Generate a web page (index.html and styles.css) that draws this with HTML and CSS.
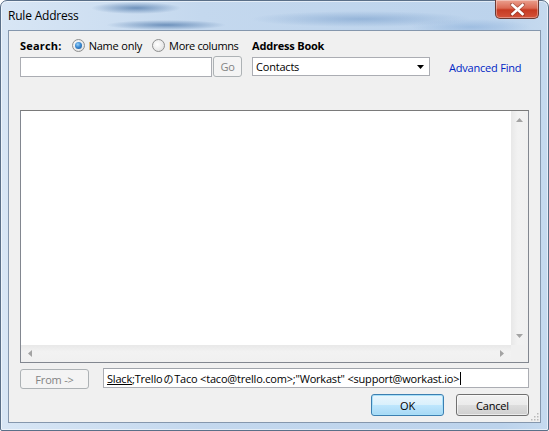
FILE: index.html
```html
<!DOCTYPE html>
<html>
<head>
<meta charset="utf-8">
<link rel="stylesheet" href="styles.css">
</head>
<body>
<div class="window">
  <div class="titlebar">
    <span class="title">Rule Address</span>
    <div class="close">
      <svg width="17" height="13" viewBox="0 0 17 13"><path d="M3 1.5 L14 11.5 M14 1.5 L3 11.5" stroke="#6b2a20" stroke-width="4" stroke-linecap="round" opacity=".45"/><path d="M3.5 2 L13.5 11 M13.5 2 L3.5 11" stroke="#fff" stroke-width="2.6" stroke-linecap="square"/></svg>
    </div>
  </div>
  <div class="client">
    <div class="top">
      <div class="search-head">
        <b class="lbl">Search:</b>
        <span class="radio"><span class="rb on"></span>Name only</span>
        <span class="radio"><span class="rb"></span>More columns</span>
      </div>
      <b class="lbl">Address Book</b>
      <span></span>
      <div class="search-row">
        <div class="field search-field"></div>
        <div class="btn disabled go">Go</div>
      </div>
      <div class="combo">
        <span>Contacts</span>
        <svg width="7" height="4" viewBox="0 0 7 4"><path d="M0 0H7L3.5 4Z" fill="#000"/></svg>
      </div>
      <span class="link">Advanced Find</span>
    </div>
    <div class="listbox">
      <div class="list-area"></div>
      <div class="vscroll">
        <svg width="7" height="4" viewBox="0 0 7 4"><path d="M0 4H7L3.5 0Z" fill="#a3a3a3"/></svg>
        <svg width="7" height="4" viewBox="0 0 7 4"><path d="M0 0H7L3.5 4Z" fill="#a3a3a3"/></svg>
      </div>
      <div class="hscroll">
        <svg width="4" height="7" viewBox="0 0 4 7"><path d="M4 0V7L0 3.5Z" fill="#a3a3a3"/></svg>
        <svg width="4" height="7" viewBox="0 0 4 7"><path d="M0 0V7L4 3.5Z" fill="#a3a3a3"/></svg>
      </div>
      <div class="corner"></div>
    </div>
    <div class="from-row">
      <div class="btn disabled from">From -&gt;</div>
      <div class="field addr"><span class="u">Slack</span>;Trello<span class="jp">の</span>Taco &lt;taco@trello.com&gt;;"Workast" &lt;support@workast.io&gt;<span class="caret"></span></div>
    </div>
    <div class="actions">
      <div class="btn default">OK</div>
      <div class="btn">Cancel</div>
    </div>
    <svg class="grip" width="10" height="10" viewBox="0 0 10 10"><g fill="#b9b9b9"><rect x="8" y="2" width="1.5" height="1.5"/><rect x="5" y="5" width="1.5" height="1.5"/><rect x="8" y="5" width="1.5" height="1.5"/><rect x="2" y="8" width="1.5" height="1.5"/><rect x="5" y="8" width="1.5" height="1.5"/><rect x="8" y="8" width="1.5" height="1.5"/></g></svg>
  </div>
</div>
</body>
</html>
```

FILE: styles.css
```css
* { box-sizing: border-box; }
html, body { margin: 0; padding: 0; }
body {
  width: 549px;
  height: 431px;
  overflow: hidden;
  font-family: "Open Sans", "Noto Sans", sans-serif;
  font-size: 11px;
  letter-spacing: -0.2px;
  color: #000;
  background: #fff;
}
.window {
  width: 549px;
  height: 431px;
  display: flex;
  flex-direction: column;
  border: 1px solid #5a6f88;
  border-radius: 7px 7px 2px 2px;
  background:
    radial-gradient(ellipse 45px 6px at 135px 7px, rgba(35,85,145,.55), rgba(35,85,145,0)),
    radial-gradient(ellipse 60px 5px at 165px 24px, rgba(35,85,145,.55), rgba(35,85,145,0)),
    radial-gradient(ellipse 110px 8px at 360px 18px, rgba(70,120,180,.35), rgba(70,120,180,0)),
    radial-gradient(ellipse 60px 8px at 470px 26px, rgba(90,140,200,.3), rgba(90,140,200,0)),
    linear-gradient(to right, #d8e6f5 0px, #c4d8ee 200px, #bcd3ec 500px, #c6daef 549px);
  box-shadow: inset 0 0 0 1px rgba(255,255,255,.55);
  position: relative;
}
.titlebar {
  height: 29px;
  display: flex;
  align-items: flex-start;
  justify-content: space-between;
  padding-left: 7px;
}
.title {
  margin-top: 6px;
  font-size: 12px;
  color: #000;
}
.close {
  width: 44px;
  height: 19px;
  margin-right: 9px;
  margin-top: -1px;
  border: 1px solid #6b3a33;
  border-top: none;
  border-radius: 0 0 5px 5px;
  background: linear-gradient(to bottom, #eba08f 0%, #db6a54 45%, #c63a22 55%, #d4533a 100%);
  box-shadow: inset 0 0 0 1px rgba(255,255,255,.35);
  display: flex;
  align-items: center;
  justify-content: center;
}
.client {
  flex: 1;
  margin: 0 7px 7px 7px;
  background: #f0f0f0;
  border: 1px solid #8597ad;
  padding: 6px 11px 0 11px;
  display: flex;
  flex-direction: column;
  position: relative;
}
.top {
  display: grid;
  grid-template-columns: 222px 178px auto;
  column-gap: 10px;
  row-gap: 4px;
  grid-template-rows: 16px 20px;
}
.search-head {
  display: flex;
  align-items: center;
  white-space: nowrap;
}
.lbl {
  font-weight: bold;
  display: flex;
  align-items: center;
  white-space: nowrap;
}
.search-head .lbl { letter-spacing: 0.2px; }
.radio {
  display: flex;
  align-items: center;
  margin-left: 10px;
  flex-shrink: 0;
}
.radio + .radio { margin-left: 10px; letter-spacing: -0.35px; }
.rb {
  width: 13px;
  height: 13px;
  flex-shrink: 0;
  border-radius: 50%;
  border: 1px solid #8e8f8f;
  background: radial-gradient(circle at 40% 40%, #fff 0%, #e9e9e9 60%, #d3d3d3 100%);
  margin-right: 4px;
  position: relative;
}
.rb.on::after {
  content: "";
  position: absolute;
  left: 2px; top: 2px;
  width: 7px; height: 7px;
  border-radius: 50%;
  background: radial-gradient(circle at 40% 35%, #9ad1f7 0%, #3b8ad3 45%, #1b4f8a 100%);
}
.search-row {
  display: flex;
  gap: 1px;
}
.field {
  background: #fff;
  border: 1px solid #abadb3;
  border-top-color: #a0a4ab;
}
.search-field {
  width: 192px;
  height: 20px;
}
.btn {
  display: flex;
  align-items: center;
  justify-content: center;
  border: 1px solid #707070;
  border-radius: 3px;
  background: linear-gradient(to bottom, #f2f2f2 0%, #ebebeb 50%, #dddddd 51%, #cfcfcf 100%);
  box-shadow: inset 0 0 0 1px rgba(255,255,255,.6);
  color: #000;
}
.btn.disabled {
  border-color: #adb2b5;
  background: #f4f4f4;
  box-shadow: none;
  color: #838383;
}
.go {
  width: 29px;
  height: 21px;
  margin-top: -1px;
}
.combo {
  border: 1px solid #abadb3;
  background: #fff;
  display: flex;
  align-items: center;
  justify-content: space-between;
  padding: 0 5px 0 3px;
  height: 19px;
}
.link {
  color: #0026c5;
  margin-left: 9px;
  display: flex;
  align-items: center;
  white-space: nowrap;
}
.listbox {
  margin-top: 33px;
  height: 253px;
  border: 1px solid #828790;
  border-top-color: #7a7a7a;
  background: #fff;
  display: grid;
  grid-template-columns: 1fr 17px;
  grid-template-rows: 1fr 17px;
}
.list-area { background: #fff; }
.vscroll {
  background: linear-gradient(to right, #e8e8e8, #f2f2f2 40%, #f0f0f0);
  display: flex;
  flex-direction: column;
  justify-content: space-between;
  align-items: center;
  padding: 7px 0 7px;
}
.hscroll {
  background: linear-gradient(to bottom, #e8e8e8, #f2f2f2 40%, #f0f0f0);
  display: flex;
  justify-content: space-between;
  align-items: center;
  padding: 0 7px;
}
.corner { background: #f0f0f0; }
.from-row {
  display: flex;
  margin-top: 5px;
  height: 21px;
  gap: 14px;
}
.from {
  width: 69px;
  height: 20px;
  margin-top: 1px;
}
.addr {
  flex: 1;
  height: 20px;
  padding-left: 3px;
  display: flex;
  align-items: center;
  white-space: nowrap;
}
.jp {
  font-family: "Noto Sans CJK JP", sans-serif;
  font-size: 10px;
  margin: 0 1px;
}
.u { text-decoration: underline; }
.caret {
  display: inline-block;
  width: 1px;
  height: 13px;
  background: #000;
  margin-left: 1px;
}
.actions {
  display: flex;
  justify-content: flex-end;
  gap: 12px;
  margin-top: 5px;
}
.actions .btn {
  width: 73px;
  height: 22px;
}
.btn.default {
  border-color: #3c7fb1;
  background: linear-gradient(to bottom, #eaf6fd 0%, #d9f0fc 50%, #bee6fd 51%, #a7d9f5 100%);
  box-shadow: inset 0 0 0 1px #a8e0f9;
}
.grip {
  position: absolute;
  right: 1px;
  bottom: 1px;
}
```
